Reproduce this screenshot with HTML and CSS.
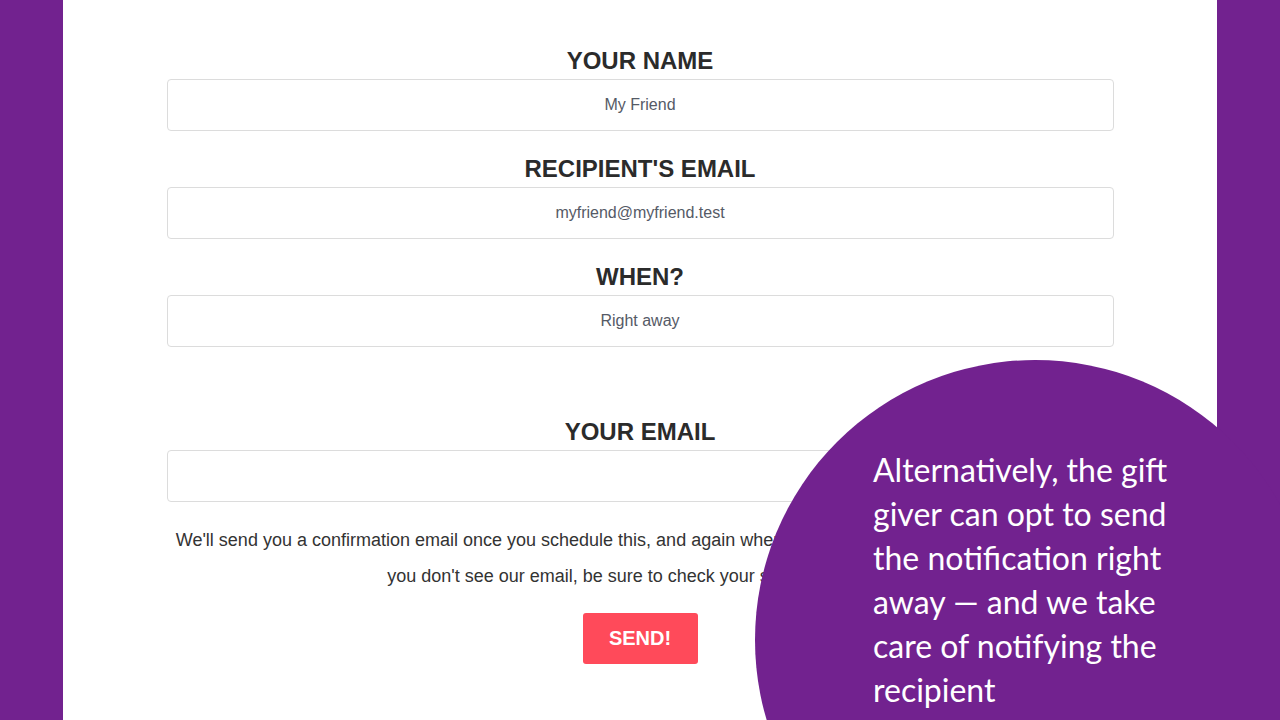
FILE: index.html
```html
<!DOCTYPE html>
<html lang="en">
<head>
  <meta charset="UTF-8" />
  <meta name="viewport" content="width=device-width, initial-scale=1.0"/>
  <title>Send Gift</title>
  <link rel="stylesheet" href="styles.css">
</head>
<body>

  <div class="page">
    <form class="gift-form" onsubmit="return false;">
      <div class="field">
        <label for="name">YOUR NAME</label>
        <input id="name" type="text" value="My Friend">
      </div>

      <div class="field">
        <label for="recipient">RECIPIENT'S EMAIL</label>
        <input id="recipient" type="text" value="myfriend@myfriend.test">
      </div>

      <div class="field">
        <label for="when">WHEN?</label>
        <input id="when" type="text" value="Right away">
      </div>

      <div class="field field-spaced">
        <label for="email">YOUR EMAIL</label>
        <input id="email" type="text" value="">
      </div>

      <p class="note">We'll send you a confirmation email once you schedule this, and again when it's delivered to your friend's inbox. So if<br>you don't see our email, be sure to check your spam folder, too.</p>

      <button type="submit">SEND!</button>
    </form>
  </div>

  <div class="bubble">
    <p>Alternatively, the gift giver can opt to send the notification right away &mdash; and we take care of notifying the recipient</p>
  </div>

</body>
</html>
```

FILE: styles.css
```css
html, body {
  margin: 0;
  height: 100%;
}

body {
  background-color: #72228f;
  font-family: 'Liberation Sans', Arial, sans-serif;
  color: #333;
  overflow: hidden;
  position: relative;
}

.page {
  background-color: #ffffff;
  width: 1154px;
  margin-left: 63px;
  height: 100%;
}

.gift-form {
  width: 947px;
  margin: 0 auto;
  padding-top: 48px;
  text-align: center;
}

.field {
  display: flex;
  flex-direction: column;
  gap: 5px;
  margin-bottom: 25px;
}

.field-spaced {
  margin-top: 72px;
  margin-bottom: 0;
}

.field label {
  font-size: 24px;
  font-weight: bold;
  line-height: 26px;
  color: #2b2b2b;
}

.field input {
  height: 52px;
  box-sizing: border-box;
  border: 1px solid #dcdcdc;
  border-radius: 4px;
  font-family: 'Liberation Sans', Arial, sans-serif;
  font-size: 16px;
  color: #555a66;
  text-align: center;
  outline: none;
}

.note {
  margin: 20px -60px 0;
  font-size: 18px;
  line-height: 36px;
  color: #333;
}

button {
  margin-top: 19px;
  width: 115px;
  height: 51px;
  background-color: #ff4a5a;
  color: #ffffff;
  font-family: 'Liberation Sans', Arial, sans-serif;
  font-weight: bold;
  font-size: 20px;
  border: none;
  border-radius: 3px;
  cursor: pointer;
}

.bubble {
  position: absolute;
  left: 755px;
  top: 360px;
  width: 560px;
  height: 560px;
  border-radius: 50%;
  background-color: #72228f;
}

.bubble p {
  margin: 88px 0 0 118px;
  width: 320px;
  font-family: Lato, 'Open Sans', sans-serif;
  font-size: 32px;
  line-height: 44px;
  color: #ffffff;
}
```
